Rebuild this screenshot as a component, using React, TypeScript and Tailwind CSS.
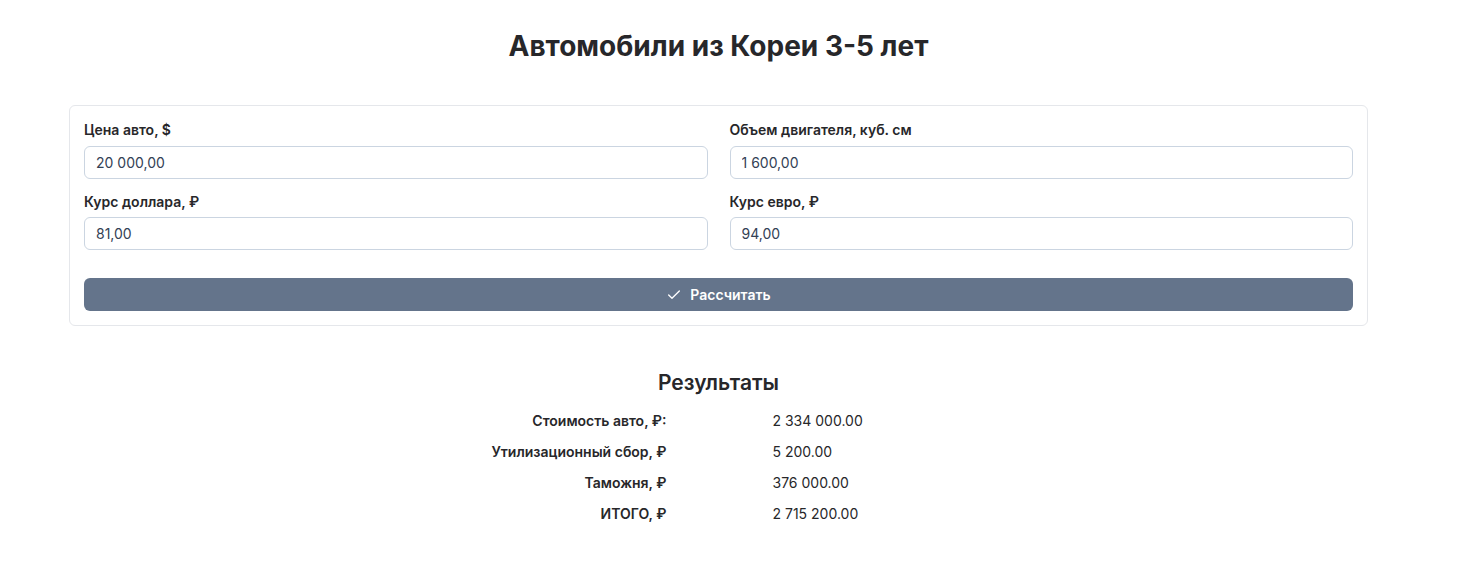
import { Check } from 'lucide-react'

const fields = [
    { label: 'Цена авто, $', value: '20 000,00' },
    { label: 'Объем двигателя, куб. см', value: '1 600,00' },
    { label: 'Курс доллара, ₽', value: '81,00' },
    { label: 'Курс евро, ₽', value: '94,00' },
]

const results = [
    { label: 'Стоимость авто, ₽:', value: '2 334 000.00' },
    { label: 'Утилизационный сбор, ₽', value: '5 200.00' },
    { label: 'Таможня, ₽', value: '376 000.00' },
    { label: 'ИТОГО, ₽', value: '2 715 200.00' },
]

export default function App() {
    return (
        <div className="min-h-screen bg-white text-[#27272a] font-['Inter',sans-serif]">
            <div className="w-[1299px] ml-[69px] flex flex-col">
                <h1 className="text-[28px] font-bold text-center leading-[34px] pt-[29px]">Автомобили из Кореи 3-5 лет</h1>

                <div className="mt-[42px] border border-[#e5e7eb] rounded-md px-[14px] pt-[14px] pb-[14px]">
                    <div className="grid grid-cols-2 gap-x-[22px] gap-y-[13px]">
                        {fields.map((f) => (
                            <div key={f.label} className="flex flex-col">
                                <label className="text-sm font-semibold leading-5 mb-[5.5px]">{f.label}</label>
                                <input
                                    defaultValue={f.value}
                                    className="h-[33px] border border-[#cbd5e1] rounded-md px-[11px] text-sm text-[#334155] outline-none"
                                />
                            </div>
                        ))}
                    </div>
                    <button className="mt-[28px] w-full h-[33px] bg-[#64748b] rounded-md text-white text-sm font-semibold flex items-center justify-center gap-2">
                        <Check size={16} strokeWidth={2} />
                        Рассчитать
                    </button>
                </div>

                <h2 className="text-[21px] font-semibold text-center mt-[43px] leading-7">Результаты</h2>
                <div className="w-[500px] mx-auto grid grid-cols-2 mt-[8px]">
                    {results.map((r) => (
                        <div key={r.label} className="contents">
                            <div className="text-right pr-[52px] text-sm font-semibold leading-[31px]">{r.label}</div>
                            <div className="pl-[54px] text-sm leading-[31px]">{r.value}</div>
                        </div>
                    ))}
                </div>
            </div>
        </div>
    )
}
